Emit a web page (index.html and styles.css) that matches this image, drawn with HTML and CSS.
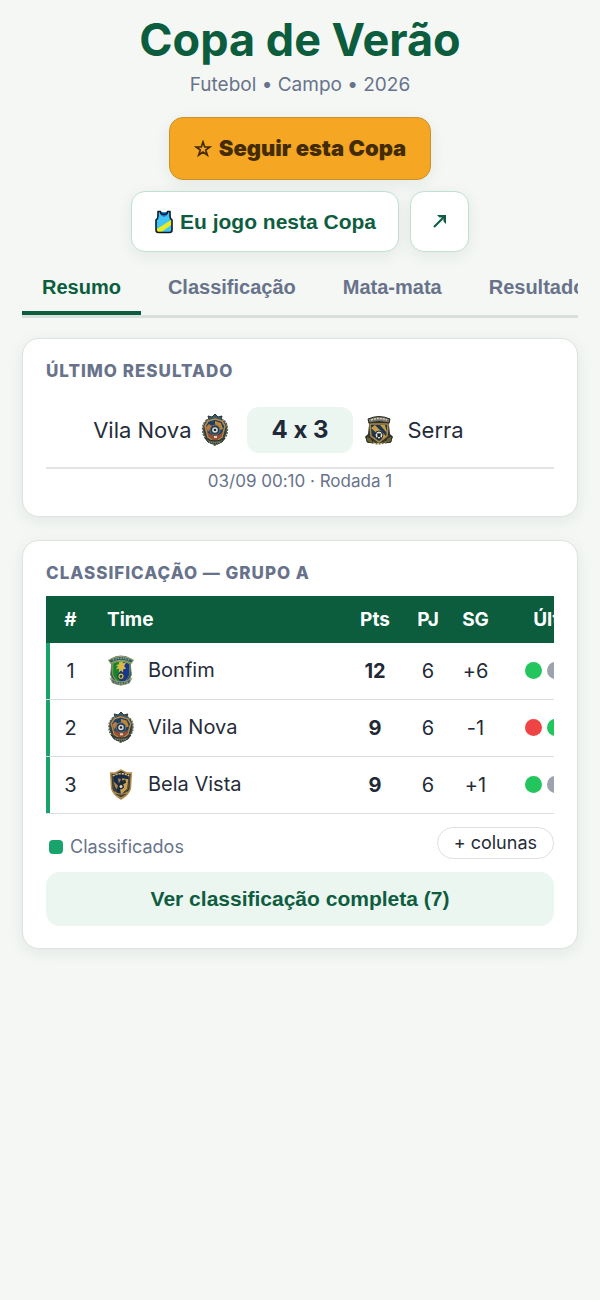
FILE: index.html
```html
<!DOCTYPE html>
<html lang="pt-BR">
<head>
<meta charset="utf-8">
<meta name="viewport" content="width=device-width, initial-scale=1">
<title>Copa de Verão</title>
<link rel="stylesheet" href="styles.css">
</head>
<body>
<svg class="sprites" aria-hidden="true">
  <symbol id="crest-vila" viewBox="3 0 26 32">
    <path d="M8 6Q3 10 4 17Q4 25 16 31Q28 25 28 17Q29 10 24 6Z" fill="#343d36" stroke="#59675a" stroke-width="2" stroke-dasharray="2 1"/>
    <path d="M10 6l-1-4 4 1 3-3 3 3 4-1-1 4z" fill="#3b5961" stroke="#26343a"/>
    <path d="M9 7l7-2 7 2 3 5-3 11-7 5-7-5-3-11z" fill="#1d3f60" stroke="#b78a52" stroke-width="1.500"/>
    <path d="M16 7l6 2 2 6-3 1-5-6z" fill="#c38534"/>
    <path d="M7 13l3-3 3 2-4 6z" fill="#c07a3c"/>
    <path d="M8 18q8 7 16 0l-2 5-6 4-6-4z" fill="#9c4e32"/>
    <circle cx="16" cy="16" r="5" fill="#2b3a46" stroke="#66767e"/>
    <circle cx="16" cy="16" r="2.800" fill="#d9e0dd"/>
    <path d="M16 14.500l1.400 1-.5 1.500h-1.800l-.5-1.500z" fill="#182430"/>
    <path d="M6 24q10 6 20 0l-3 4q-7 4-14 0z" fill="#53614f" stroke="#262f2a"/>
    <path d="M15 22h3v2h-3z" fill="#e9d6b6"/>
    <path d="M10 28q6 2 12 0" fill="none" stroke="#a3a491" stroke-dasharray="1 1"/>
  </symbol>
  <symbol id="crest-serra" viewBox="0 0 28 30">
    <path d="M3 4Q14-1 25 4l-1 6 1 9 3 3-3 6H3l-3-6 3-3 1-9z" fill="#34342b"/>
    <path d="M5 9h18l-1 12-8 6-8-6z" fill="#20354e" stroke="#aa8a45" stroke-width="1.500"/>
    <path d="M6 13l4-3 11 11-3 3zM15 10h5l2 8z" fill="#c49d49"/>
    <path d="M3 4q11-5 22 0l-1 4q-10-3-20 0z" fill="#777568" stroke="#292b27"/>
    <path d="M6 5q8-3 16 0" fill="none" stroke="#d8d2bc" stroke-width="1.500" stroke-dasharray="2 1"/>
    <circle cx="14" cy="20" r="4" fill="#e4e4df" stroke="#252a2d"/>
    <path d="M14 18l2 1.500-.8 2.400h-2.400L12 19.500z" fill="#20262d"/>
    <path d="M11 17.500l1.500 1M17 17.500l-1.500 1M11.500 23l1.500-1M16.500 23l-1.500-1" stroke="#20262d"/>
    <path d="M1 21l5 2 2 5-6-1zM27 21l-5 2-2 5 6-1z" fill="#66613b" stroke="#302e20"/>
    <path d="M5 26q9 5 18 0" fill="none" stroke="#796c3d" stroke-width="2" stroke-dasharray="2 1"/>
  </symbol>
  <symbol id="crest-bonfim" viewBox="1 1 26 30">
    <path d="M4 5Q14-1 24 5l-1 5 1 10q-2 8-10 10Q6 28 4 20l1-10z" fill="#284c51" stroke="#6e8164"/>
    <path d="M6 9q8-4 16 0v11q-2 6-8 8-6-2-8-8z" fill="#13852d" stroke="#8d9f55"/>
    <path d="M17 8l5 2v10q-2 6-8 8l-3-7z" fill="#163690"/>
    <path d="M2 6Q14-1 26 6l-2 3Q14 3 4 9z" fill="#275f68" stroke="#a1a06b"/>
    <path d="M6 6q8-4 16 0" fill="none" stroke="#a7b4a6" stroke-dasharray="1.500 1"/>
    <path d="M12 8l3-1 1 2 3-1-2 4 2 2-3 1v3l-2-2-2 2v-4l-3 1 2-3-2-1 3-1z" fill="#d7b84b"/>
    <circle cx="14" cy="21.500" r="3" fill="#d3c26e" stroke="#223744"/>
    <path d="M14 20l1.500 1-.7 2h-1.600l-.7-2z" fill="#293b35"/>
    <path d="M4 24q10 6 20 0l-2 4q-8 4-16 0z" fill="#305861" stroke="#8d9876"/>
    <path d="M7 27q7 3 14 0" fill="none" stroke="#bcb77d" stroke-dasharray="1.500 1"/>
  </symbol>
  <symbol id="crest-bela" viewBox="1 1 26 30">
    <path d="M4 5h4l6-3 6 3h4l-1 15q-2 6-9 10-7-4-9-10z" fill="#263044" stroke="#b18e4c" stroke-width="1.500"/>
    <path d="M6 8l8-3 8 3-1 11q-2 5-7 8-5-3-7-8z" fill="#172c4b" stroke="#604d2d"/>
    <path d="M15 10l6 1-1 9-6 6-1-7 3-3z" fill="#c7a050"/>
    <path d="M7 13l4 4-1 4-2-3zM11 10l3 1-2 4z" fill="#aa8848"/>
    <path d="M6 7.500q8-4 16 0" fill="none" stroke="#d3ba7a" stroke-width="1.500" stroke-dasharray="2 1"/>
    <path d="M14 13l4-2 1 3-3 2 1 3-4 1-2-3z" fill="#202835"/>
    <circle cx="14" cy="18" r="2" fill="#e4d7b7" stroke="#1c2736"/>
    <path d="M7 23q7 5 14 0l-2 3-5 3-5-3z" fill="#414039" stroke="#aa884a"/>
  </symbol>
</svg>

<main class="page">
  <header class="hero">
    <h1 class="title">Copa de Verão</h1>
    <p class="subtitle">Futebol • Campo • 2026</p>
    <div class="actions">
      <button type="button" class="btn btn-follow"><svg class="star" viewBox="0 0 18 18" aria-hidden="true"><path d="M9 2l1.700 5h5.200l-4.200 3 1.600 5L9 12l-4.300 3 1.600-5-4.200-3h5.200z" fill="none" stroke="currentColor" stroke-width="1.700"/></svg>Seguir esta Copa</button>
      <div class="actions-row">
        <button type="button" class="btn btn-light"><svg class="shirt" viewBox="0 0 20 24" aria-hidden="true"><path d="M4 1.500h2.500q0 4 3.500 4t3.500-4H16V6q0 3 2 4v10q0 2.500-2.500 2.500h-11Q2 22.500 2 20V10q2-1 2-4z" fill="#42c5f5"/><path d="M18 9.500v5L6.500 22.500h-4L2 19.500z" fill="#e9ec22"/><path d="M6 2v2q4 6 8 0V2" fill="#1683df"/><path d="M4 1.500h2.500q0 3 3.500 3t3.500-3H16V6q0 3 2 4v10q0 2.500-2.500 2.500h-11Q2 22.500 2 20V10q2-1 2-4z" fill="none" stroke="#101820" stroke-width="1.600" stroke-linejoin="round"/></svg>Eu jogo nesta Copa</button>
        <button type="button" class="btn btn-light btn-share" aria-label="Compartilhar"><svg class="arrow" viewBox="0 0 16 16" aria-hidden="true"><path d="M2 13L12 3" fill="none" stroke="currentColor" stroke-width="2.200"/><path d="M5 1h9v9l-2.500-2.500V3.500H7.500z" fill="currentColor"/></svg></button>
      </div>
    </div>
  </header>

  <nav class="tabs" aria-label="Seções">
    <button type="button" class="tab active" aria-current="page">Resumo</button>
    <button type="button" class="tab">Classificação</button>
    <button type="button" class="tab">Mata-mata</button>
    <button type="button" class="tab">Resultados</button>
  </nav>

  <section class="card">
    <h2 class="card-title">Último resultado</h2>
    <div class="match">
      <div class="team home"><span>Vila Nova</span><svg class="badge-home" aria-hidden="true"><use href="#crest-vila"/></svg></div>
      <strong class="score">4 x 3</strong>
      <div class="team away"><svg class="badge-away" aria-hidden="true"><use href="#crest-serra"/></svg><span>Serra</span></div>
    </div>
    <p class="match-info">03/09 00:10 · Rodada 1</p>
  </section>

  <section class="card standings">
    <h2 class="card-title">Classificação — Grupo A</h2>
    <div class="table-scroll">
      <table class="table">
        <colgroup><col class="col-pos"><col><col class="col-pts"><col class="col-pj"><col class="col-sg"><col class="col-form"></colgroup>
        <thead><tr><th>#</th><th class="name">Time</th><th>Pts</th><th>PJ</th><th>SG</th><th>Últimos 5</th></tr></thead>
        <tbody>
          <tr><td class="pos">1</td><td class="name"><div class="club"><svg class="crest" aria-hidden="true"><use href="#crest-bonfim"/></svg>Bonfim</div></td><td class="pts">12</td><td>6</td><td>+6</td><td><div class="form"><i class="dot win"></i><i class="dot draw"></i><i class="dot win"></i><i class="dot win"></i><i class="dot win"></i></div></td></tr>
          <tr><td class="pos">2</td><td class="name"><div class="club"><svg class="crest" aria-hidden="true"><use href="#crest-vila"/></svg>Vila Nova</div></td><td class="pts">9</td><td>6</td><td>-1</td><td><div class="form"><i class="dot loss"></i><i class="dot win"></i><i class="dot win"></i><i class="dot loss"></i><i class="dot win"></i></div></td></tr>
          <tr><td class="pos">3</td><td class="name"><div class="club"><svg class="crest" aria-hidden="true"><use href="#crest-bela"/></svg>Bela Vista</div></td><td class="pts">9</td><td>6</td><td>+1</td><td><div class="form"><i class="dot win"></i><i class="dot draw"></i><i class="dot loss"></i><i class="dot win"></i><i class="dot win"></i></div></td></tr>
        </tbody>
      </table>
    </div>
    <div class="table-foot">
      <span class="legend"><i class="swatch"></i>Classificados</span>
      <button type="button" class="pill">+ colunas</button>
    </div>
    <button type="button" class="btn-full">Ver classificação completa (7)</button>
  </section>
</main>
</body>
</html>
```
FILE: styles.css
```css
* { box-sizing: border-box; }

body {
  margin: 0;
  min-height: 100vh;
  background: #f4f7f4;
  color: #252c39;
  font-family: Inter, "Liberation Sans", sans-serif;
  font-variant-ligatures: no-contextual;
}

button { font-family: "Liberation Sans", Arial, sans-serif; cursor: pointer; }

.sprites { position: absolute; width: 0; height: 0; }

.page { padding: 12px 22px; }

.hero { text-align: center; }

.title {
  margin: 0;
  color: #0b5d3e;
  font-size: 45px;
  line-height: 56px;
  font-weight: 700;
}

.subtitle {
  margin: 4px 0 0;
  color: #68738b;
  font-size: 19px;
  line-height: 25px;
}

.actions {
  display: flex;
  flex-direction: column;
  align-items: center;
  gap: 11px;
  margin-top: 20px;
}

.actions-row { display: flex; gap: 11px; }

.btn {
  display: flex;
  align-items: center;
  justify-content: center;
  border: 1px solid;
  border-radius: 14px;
  font-size: 21px;
  font-weight: 700;
  line-height: 23px;
  box-shadow: 0 4px 16px rgba(20, 60, 45, 0.07);
}

.btn-follow {
  gap: 7px;
  padding: 19px 24px;
  border-color: #c9912c;
  background: #f5a623;
  color: #432b04;
  font-family: Inter, sans-serif;
  font-size: 22px;
  font-weight: 900;
}

.btn-light {
  gap: 6px;
  padding: 18px 22px;
  border-color: #bfe0d3;
  background: #fff;
  color: #0f5d40;
}

.btn-share { width: 59px; padding: 0; }

.star { width: 18px; height: 18px; }
.shirt { width: 20px; height: 24px; margin: -1px 0; }
.arrow { width: 16px; height: 16px; }

.tabs {
  display: flex;
  gap: 7px;
  margin-top: 6px;
  overflow-x: auto;
  scrollbar-width: none;
  border-bottom: 3px solid #d9dfdc;
}

.tab {
  flex: none;
  padding: 17px 20px 11px;
  border: 0;
  border-bottom: 4px solid transparent;
  background: none;
  color: #68738b;
  font-size: 20px;
  font-weight: 700;
  line-height: 25px;
}

.tab.active { border-bottom-color: #0b5d3e; color: #0b5d3e; }

.card {
  margin-top: 20px;
  padding: 20px 23px 22px;
  border: 1px solid #dde3e0;
  border-radius: 17px;
  background: #fff;
  box-shadow: 0 4px 16px rgba(20, 50, 40, 0.07);
}

.card.standings { margin-top: 23px; }

.card-title {
  margin: 0;
  color: #68738b;
  font-size: 17px;
  font-weight: 800;
  line-height: 24px;
  letter-spacing: 1px;
  text-transform: uppercase;
}

.match {
  display: grid;
  grid-template-columns: 1fr auto 1fr;
  align-items: center;
  column-gap: 12px;
  padding: 24px 0 14px;
  border-bottom: 2px solid #e2e5e4;
}

.team { display: flex; align-items: center; font-size: 22px; line-height: 28px; }
.home { justify-content: flex-end; gap: 8px; padding-right: 4px; }
.away { gap: 15px; }
.badge-home { width: 32px; height: 32px; }
.badge-away { width: 28px; height: 30px; }

.score {
  padding: 8px 24px;
  border-radius: 12px;
  background: #ebf6f0;
  color: #1f2937;
  font-size: 24px;
  line-height: 30px;
}

.match-info {
  margin: 0;
  color: #68738b;
  font-size: 17px;
  line-height: 25px;
  text-align: center;
}

.table-scroll {
  margin-top: 11px;
  overflow-x: auto;
  scrollbar-width: none;
}

.table {
  width: 100%;
  min-width: 611px;
  border-collapse: separate;
  border-spacing: 0;
  table-layout: fixed;
  font-size: 20px;
  line-height: 24px;
}

.col-pos { width: 49px; }
.col-pts { width: 54px; }
.col-pj { width: 52px; }
.col-sg { width: 43px; }
.col-form { width: 160px; }

.table th {
  height: 47px;
  padding: 0;
  background: #0b5d3e;
  color: #fff;
  font-size: 19px;
  font-weight: 700;
}

.table td {
  height: 57px;
  padding: 0;
  border-bottom: 1px solid #d9dedf;
  text-align: center;
}

.table .name { padding-left: 12px; text-align: left; }

.table td.pos { box-shadow: inset 4px 0 #18a36d; }

.pts { color: #1f2937; font-weight: 700; }

.club { display: flex; align-items: center; gap: 13px; padding-bottom: 2px; }

.crest { width: 28px; height: 31px; }

.form { display: flex; justify-content: center; gap: 5px; padding-bottom: 2px; }

.dot { width: 17px; height: 17px; border-radius: 50%; }
.win { background: #22c55e; }
.draw { background: #9ca3af; }
.loss { background: #ef4444; }

.table-foot {
  display: flex;
  align-items: flex-end;
  justify-content: space-between;
  padding: 13px 0;
}

.legend {
  display: flex;
  align-items: center;
  gap: 7px;
  padding-left: 3px;
  color: #68738b;
  font-size: 18px;
  line-height: 24px;
}

.swatch { width: 14px; height: 14px; border-radius: 4px; background: #18a36d; }

.pill {
  padding: 3px 16px;
  border: 1px solid #dde1e3;
  border-radius: 16px;
  background: #fff;
  color: #252c39;
  font-family: Inter, sans-serif;
  font-size: 18px;
  line-height: 24px;
}

.btn-full {
  display: block;
  width: 100%;
  padding: 15px;
  border: 0;
  border-radius: 14px;
  background: #ebf6f0;
  color: #0f5d40;
  font-size: 21px;
  font-weight: 700;
  line-height: 24px;
}
```
